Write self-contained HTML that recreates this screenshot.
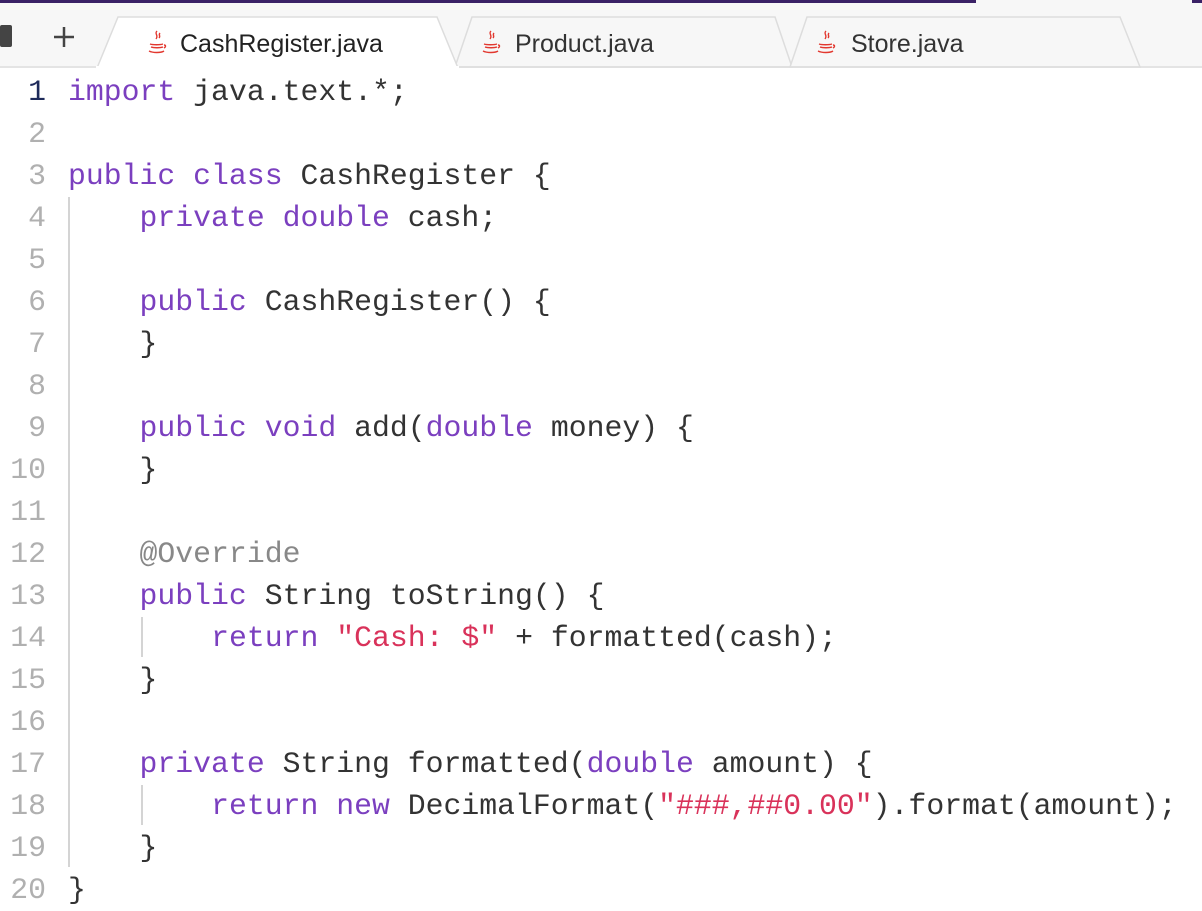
<!DOCTYPE html>
<html><head><meta charset="utf-8"><style>
body{margin:0;width:1202px;height:908px;background:#fff;overflow:hidden;position:relative;font-family:"Liberation Sans",sans-serif}
.tabbar{position:absolute;left:0;top:0;width:1202px;height:68px;background:#f7f7f7}
.tl{position:absolute;top:30px;font-size:25px;color:#333}
.row{position:absolute;left:0;height:42px;line-height:42px;font-family:"Liberation Mono",monospace;font-size:29.8px;white-space:pre;color:#333}
.n{position:absolute;right:1156px;color:#b0b0b0;text-align:right}
.c{position:absolute;left:68px}
.k{color:#7b3fbf}.s{color:#d9325a}.a{color:#888}
.g{position:absolute;width:2px;background:#d4d4d4}
</style></head><body>
<div class="tabbar"></div>
<div style="position:absolute;left:0;top:0;width:976px;height:3px;background:#3a2166"></div>
<div style="position:absolute;left:1192px;top:0;width:10px;height:3px;background:#3a2166"></div>
<svg style="position:absolute;left:0;top:0" width="1202" height="70">
<polygon points="455,67 472,17 775,17 792,67" fill="#f7f7f7" stroke="#ddd" stroke-width="1.5"/>
<polygon points="790,67 807,17 1120,17 1140,67" fill="#f7f7f7" stroke="#ddd" stroke-width="1.5"/>
<line x1="0" y1="67" x2="1202" y2="67" stroke="#ddd" stroke-width="1.5"/>
<polygon points="97,68 118,17 437,17 458,68" fill="#fff" stroke="#ddd" stroke-width="1.5"/>
<rect x="96" y="66" width="363" height="4" fill="#fff"/>
<rect x="0" y="25" width="12" height="22" rx="2" fill="#444"/>
<path d="M64 27v20M54 37h20" stroke="#444" stroke-width="2.5"/>
<g id="j" fill="none" stroke="#e2382f" stroke-width="1.4">
<path d="M157 31c-3 3 2 4-1 8M160 33c-2 2 1 3-1 5"/>
<path d="M150 44c3 1 10 1 13 0M151 47c3 1 9 1 12 0M149 51c4 2 12 2 15 0M164 45c2 0 2 2 0 3"/>
</g>
<use href="#j" x="334"/><use href="#j" x="669"/>
</svg>
<div class="tl" style="left:180px;color:#222">CashRegister.java</div>
<div class="tl" style="left:515px">Product.java</div>
<div class="tl" style="left:851px">Store.java</div>
<div class="g" style="left:68px;top:197px;height:670px"></div>
<div class="g" style="left:141px;top:617px;height:40px"></div>
<div class="g" style="left:141px;top:785px;height:40px"></div>
<div class="row" style="top:71px;width:1202px"><span class="n" style="color:#1e2a5a">1</span><span class="c"><span class="k">import</span> java.text.*;</span></div>
<div class="row" style="top:113px;width:1202px"><span class="n">2</span></div>
<div class="row" style="top:155px;width:1202px"><span class="n">3</span><span class="c"><span class="k">public class</span> CashRegister {</span></div>
<div class="row" style="top:197px;width:1202px"><span class="n">4</span><span class="c">    <span class="k">private double</span> cash;</span></div>
<div class="row" style="top:239px;width:1202px"><span class="n">5</span></div>
<div class="row" style="top:281px;width:1202px"><span class="n">6</span><span class="c">    <span class="k">public</span> CashRegister() {</span></div>
<div class="row" style="top:323px;width:1202px"><span class="n">7</span><span class="c">    }</span></div>
<div class="row" style="top:365px;width:1202px"><span class="n">8</span></div>
<div class="row" style="top:407px;width:1202px"><span class="n">9</span><span class="c">    <span class="k">public void</span> add(<span class="k">double</span> money) {</span></div>
<div class="row" style="top:449px;width:1202px"><span class="n">10</span><span class="c">    }</span></div>
<div class="row" style="top:491px;width:1202px"><span class="n">11</span></div>
<div class="row" style="top:533px;width:1202px"><span class="n">12</span><span class="c">    <span class="a">@Override</span></span></div>
<div class="row" style="top:575px;width:1202px"><span class="n">13</span><span class="c">    <span class="k">public</span> String toString() {</span></div>
<div class="row" style="top:617px;width:1202px"><span class="n">14</span><span class="c">        <span class="k">return</span> <span class="s">"Cash: $"</span> + formatted(cash);</span></div>
<div class="row" style="top:659px;width:1202px"><span class="n">15</span><span class="c">    }</span></div>
<div class="row" style="top:701px;width:1202px"><span class="n">16</span></div>
<div class="row" style="top:743px;width:1202px"><span class="n">17</span><span class="c">    <span class="k">private</span> String formatted(<span class="k">double</span> amount) {</span></div>
<div class="row" style="top:785px;width:1202px"><span class="n">18</span><span class="c">        <span class="k">return new</span> DecimalFormat(<span class="s">"###,##0.00"</span>).format(amount);</span></div>
<div class="row" style="top:827px;width:1202px"><span class="n">19</span><span class="c">    }</span></div>
<div class="row" style="top:869px;width:1202px"><span class="n">20</span><span class="c">}</span></div>
</body></html>
